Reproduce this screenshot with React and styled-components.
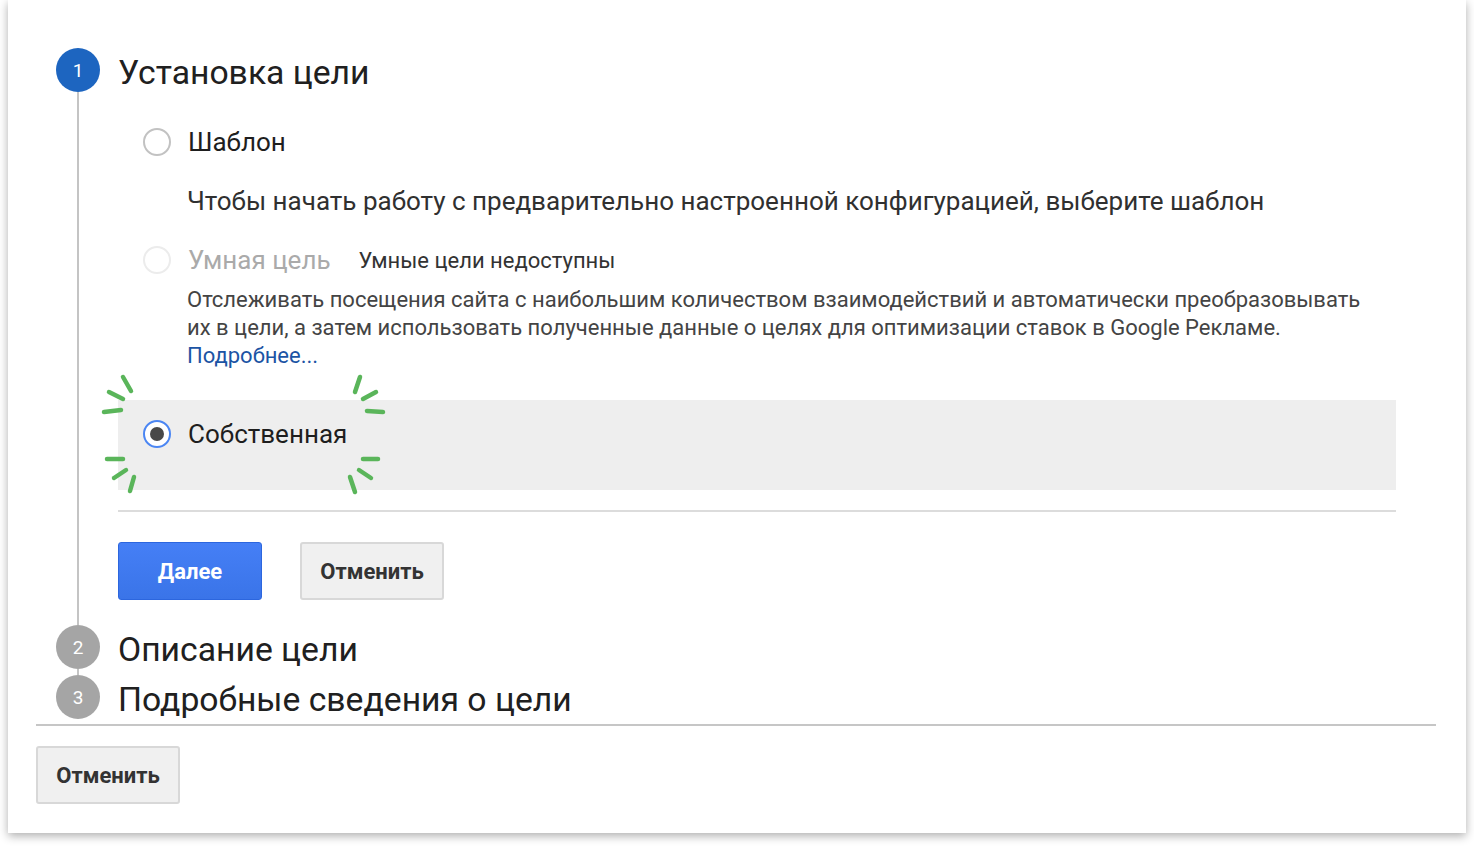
import React from "react";
import styled, { createGlobalStyle } from "styled-components";

const Global = createGlobalStyle`
  html, body { margin: 0; padding: 0; background: #ffffff; }
  body { font-family: Roboto, "Noto Sans", Arial, sans-serif; color: #222; }
  * { box-sizing: border-box; }
`;

const Page = styled.div`
  width: 1474px;
  height: 848px;
  overflow: hidden;
  padding: 0 8px;
`;

const Card = styled.div`
  width: 1458px;
  background: #fff;
  box-shadow: 0 3px 9px rgba(0, 0, 0, 0.32);
  padding: 48px 30px 29px 28px;
`;

const Steps = styled.div`
  display: flex;
  flex-direction: column;
  padding-left: 20px;
`;

const Step = styled.div`
  display: grid;
  grid-template-columns: 44px 1fr;
  column-gap: 18px;
`;

const Rail = styled.div`
  display: flex;
  flex-direction: column;
  align-items: center;
`;

const Bubble = styled.div`
  width: 44px;
  height: 44px;
  border-radius: 50%;
  background: ${(p) => (p.$active ? "#1d65c0" : "#a5a5a5")};
  color: #fff;
  font-size: 19px;
  display: flex;
  align-items: center;
  justify-content: center;
  flex: none;
`;

const Line = styled.div`
  width: 2px;
  flex: 1;
  background: #c4c4c4;
  min-height: ${(p) => p.$min || 0}px;
`;

const Content = styled.div`
  padding-bottom: ${(p) => p.$pb || 0}px;
`;

const StepTitle = styled.div`
  font-size: 33.7px;
  line-height: 44px;
  height: 44px;
  padding-top: 3px;
  color: #202020;
  white-space: nowrap;
`;

const Body = styled.div`
  width: 1278px;
  display: flex;
  flex-direction: column;
`;

const Option = styled.div`
  display: flex;
  align-items: center;
  height: 28px;
  padding-left: 25px;
  margin-top: ${(p) => p.$mt || 0}px;
`;

const Radio = styled.span`
  width: 28px;
  height: 28px;
  border-radius: 50%;
  border: 2px solid
    ${(p) => (p.$checked ? "#4b86f3" : p.$disabled ? "#ececec" : "#c2c2c2")};
  background: #fff;
  display: flex;
  align-items: center;
  justify-content: center;
  flex: none;
  &::after {
    content: "";
    display: ${(p) => (p.$checked ? "block" : "none")};
    width: 14px;
    height: 14px;
    border-radius: 50%;
    background: #484848;
  }
`;

const OptionLabel = styled.span`
  margin-left: 17px;
  font-size: 26px;
  color: ${(p) => (p.$disabled ? "#aaaaaa" : "#1e1e1e")};
  white-space: nowrap;
`;

const Note = styled.span`
  margin-left: 28px;
  font-size: 22px;
  color: #333;
  white-space: nowrap;
`;

const Description = styled.div`
  padding-left: 69px;
  font-size: ${(p) => p.$size || 26}px;
  line-height: ${(p) => p.$lh || 32}px;
  color: ${(p) => p.$color || "#303030"};
  margin-top: ${(p) => p.$mt || 0}px;
  white-space: nowrap;
`;

const Link = styled.a`
  color: #1c54a4;
  text-decoration: none;
`;

const Highlight = styled.div`
  position: relative;
  margin-top: 30px;
  height: 90px;
  background: #eeeeee;
  padding-top: 20px;
`;

const Sparkles = styled.svg`
  position: absolute;
  left: -18px;
  top: -30px;
  width: 290px;
  height: 130px;
  overflow: visible;
  pointer-events: none;
`;

const Divider = styled.div`
  height: 2px;
  background: ${(p) => p.$color || "#dcdcdc"};
  margin-top: ${(p) => p.$mt || 0}px;
`;

const Actions = styled.div`
  display: flex;
  gap: 38px;
  margin-top: ${(p) => p.$mt || 0}px;
`;

const Button = styled.button`
  height: 58px;
  width: 144px;
  border-radius: 3px;
  font-family: Roboto, Arial, sans-serif;
  font-weight: 700;
  font-size: 22px;
  cursor: pointer;
  border: ${(p) => (p.$primary ? "1px solid #2c66de" : "2px solid #d8d8d8")};
  background: ${(p) =>
    p.$primary ? "linear-gradient(#457ff6, #3a74e8)" : "#f0f0f0"};
  color: ${(p) => (p.$primary ? "#ffffff" : "#333333")};
`;

const strokes = [
  [23, 7, 31, 21],
  [9, 22, 23, 29],
  [4, 42, 21, 40],
  [7, 89, 23, 89],
  [14, 108, 26, 100],
  [34, 107, 30, 121],
  [260, 7, 255, 22],
  [276, 22, 263, 29],
  [267, 41, 283, 42],
  [263, 89, 278, 89],
  [259, 100, 271, 108],
  [250, 107, 255, 122],
];

export default function App() {
  return (
    <Page>
      <Global />
      <Card>
        <Steps>
          <Step>
            <Rail>
              <Bubble $active>1</Bubble>
              <Line />
            </Rail>
            <Content $pb={25}>
              <StepTitle>Установка цели</StepTitle>
              <Body>
                <Option $mt={36}>
                  <Radio />
                  <OptionLabel>Шаблон</OptionLabel>
                </Option>
                <Description $mt={29}>
                  Чтобы начать работу с предварительно настроенной конфигурацией, выберите шаблон
                </Description>
                <Option $mt={29}>
                  <Radio $disabled />
                  <OptionLabel $disabled>Умная цель</OptionLabel>
                  <Note>Умные цели недоступны</Note>
                </Option>
                <Description $size={22} $lh={28} $color="#444" $mt={12}>
                  Отслеживать посещения сайта с наибольшим количеством взаимодействий и автоматически преобразовывать
                  <br />
                  их в цели, а затем использовать полученные данные о целях для оптимизации ставок в Google Рекламе.
                  <br />
                  <Link href="#">Подробнее...</Link>
                </Description>
                <Highlight>
                  <Option>
                    <Radio $checked />
                    <OptionLabel>Собственная</OptionLabel>
                  </Option>
                  <Sparkles viewBox="0 0 290 130">
                    {strokes.map(([x1, y1, x2, y2], i) => (
                      <line
                        key={i}
                        x1={x1}
                        y1={y1}
                        x2={x2}
                        y2={y2}
                        stroke="#5ab55a"
                        strokeWidth="4.5"
                        strokeLinecap="round"
                      />
                    ))}
                  </Sparkles>
                </Highlight>
                <Divider $mt={20} />
                <Actions $mt={30}>
                  <Button $primary>Далее</Button>
                  <Button>Отменить</Button>
                </Actions>
              </Body>
            </Content>
          </Step>
          <Step>
            <Rail>
              <Bubble>2</Bubble>
              <Line $min={6} />
            </Rail>
            <Content $pb={6}>
              <StepTitle>Описание цели</StepTitle>
            </Content>
          </Step>
          <Step>
            <Rail>
              <Bubble>3</Bubble>
            </Rail>
            <Content>
              <StepTitle>Подробные сведения о цели</StepTitle>
            </Content>
          </Step>
        </Steps>
        <Divider $color="#c6c6c6" $mt={5} />
        <Actions $mt={20}>
          <Button>Отменить</Button>
        </Actions>
      </Card>
    </Page>
  );
}
